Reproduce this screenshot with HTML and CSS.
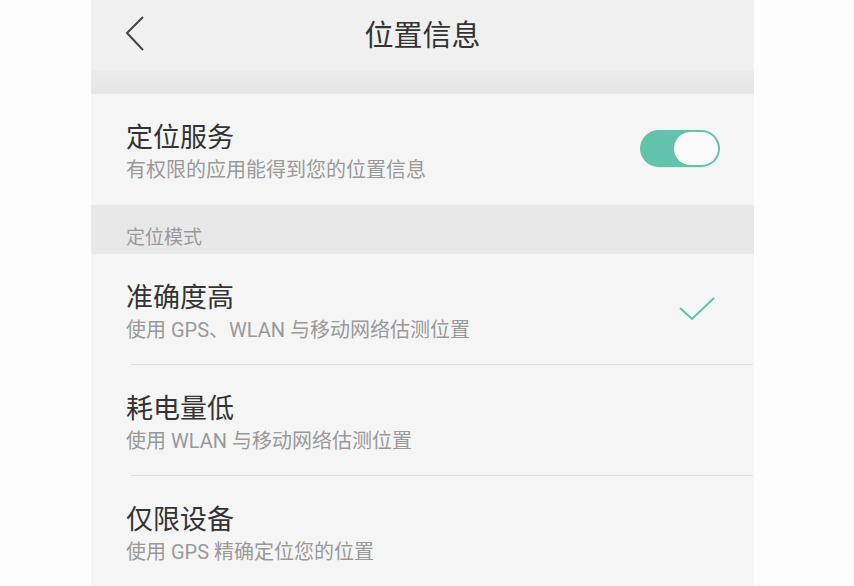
FILE: index.html
```html
<!DOCTYPE html>
<html lang="zh-CN">
<head>
<meta charset="utf-8">
<title>位置信息</title>
<link rel="stylesheet" href="styles.css">
</head>
<body>
<div class="phone">
  <header class="topbar">
    <svg class="back" width="20" height="36" viewBox="0 0 20 36"><path d="M18 1 L2 17 L18 34" fill="none" stroke="#444" stroke-width="2"/></svg>
    <h1 class="title">位置信息</h1>
  </header>
  <div class="band"></div>
  <div class="item">
    <div class="text">
      <div class="main">定位服务</div>
      <div class="sub">有权限的应用能得到您的位置信息</div>
    </div>
    <div class="toggle"><span class="knob"></span></div>
  </div>
  <div class="section">定位模式</div>
  <div class="item divided">
    <div class="text">
      <div class="main">准确度高</div>
      <div class="sub">使用 GPS、WLAN 与移动网络估测位置</div>
    </div>
    <svg class="check" width="36" height="26" viewBox="0 0 36 26"><path d="M1 11 L13 22 L35 1" fill="none" stroke="#5cc3a9" stroke-width="2"/></svg>
  </div>
  <div class="item divided">
    <div class="text">
      <div class="main">耗电量低</div>
      <div class="sub">使用 WLAN 与移动网络估测位置</div>
    </div>
  </div>
  <div class="item">
    <div class="text">
      <div class="main">仅限设备</div>
      <div class="sub">使用 GPS 精确定位您的位置</div>
    </div>
  </div>
</div>
</body>
</html>
```
FILE: styles.css
```css
html, body {
  margin: 0;
  padding: 0;
  background: #fdfdfd;
  font-family: "Noto Sans CJK SC", "Noto Sans", sans-serif;
}
.phone {
  margin-left: 91px;
  width: 663px;
  height: 586px;
  overflow: hidden;
  background: #f5f5f5;
}
.topbar {
  height: 70px;
  background: #f0f0f0;
  display: flex;
  align-items: center;
  justify-content: center;
  position: relative;
}
.back {
  position: absolute;
  left: 34px;
  top: 16px;
}
.title {
  margin: 0;
  font-size: 29px;
  font-weight: 400;
  color: #333;
  line-height: 36px;
  margin-top: -5px;
}
.band {
  height: 24px;
  background: linear-gradient(#ebebeb, #e6e6e6);
}
.item {
  height: 111px;
  box-sizing: border-box;
  padding: 26px 34px 0 35px;
  display: flex;
  align-items: flex-start;
  justify-content: space-between;
  position: relative;
  background: #f5f5f5;
}
.item.divided::after {
  content: "";
  position: absolute;
  left: 40px;
  right: 1px;
  bottom: 0;
  height: 1px;
  background: #e0e0e0;
}
.main {
  font-size: 27px;
  line-height: 32px;
  color: #333;
}
.sub {
  margin-top: 5px;
  font-family: Roboto, "Noto Sans CJK SC", sans-serif;
  font-size: 20px;
  line-height: 26px;
  color: #999;
}
.toggle {
  margin-top: 10px;
  width: 80px;
  height: 37px;
  border-radius: 19px;
  background: #62c3aa;
  box-sizing: border-box;
  padding: 2px;
  display: flex;
  justify-content: flex-end;
}
.knob {
  width: 44px;
  height: 33px;
  border-radius: 17px;
  background: #fafafa;
}
.check {
  margin-top: 17px;
  margin-right: 5px;
}
.section {
  height: 49px;
  background: #e8e8e8;
  box-sizing: border-box;
  padding: 19px 0 0 35px;
  font-size: 19px;
  line-height: 24px;
  color: #999;
}
```
